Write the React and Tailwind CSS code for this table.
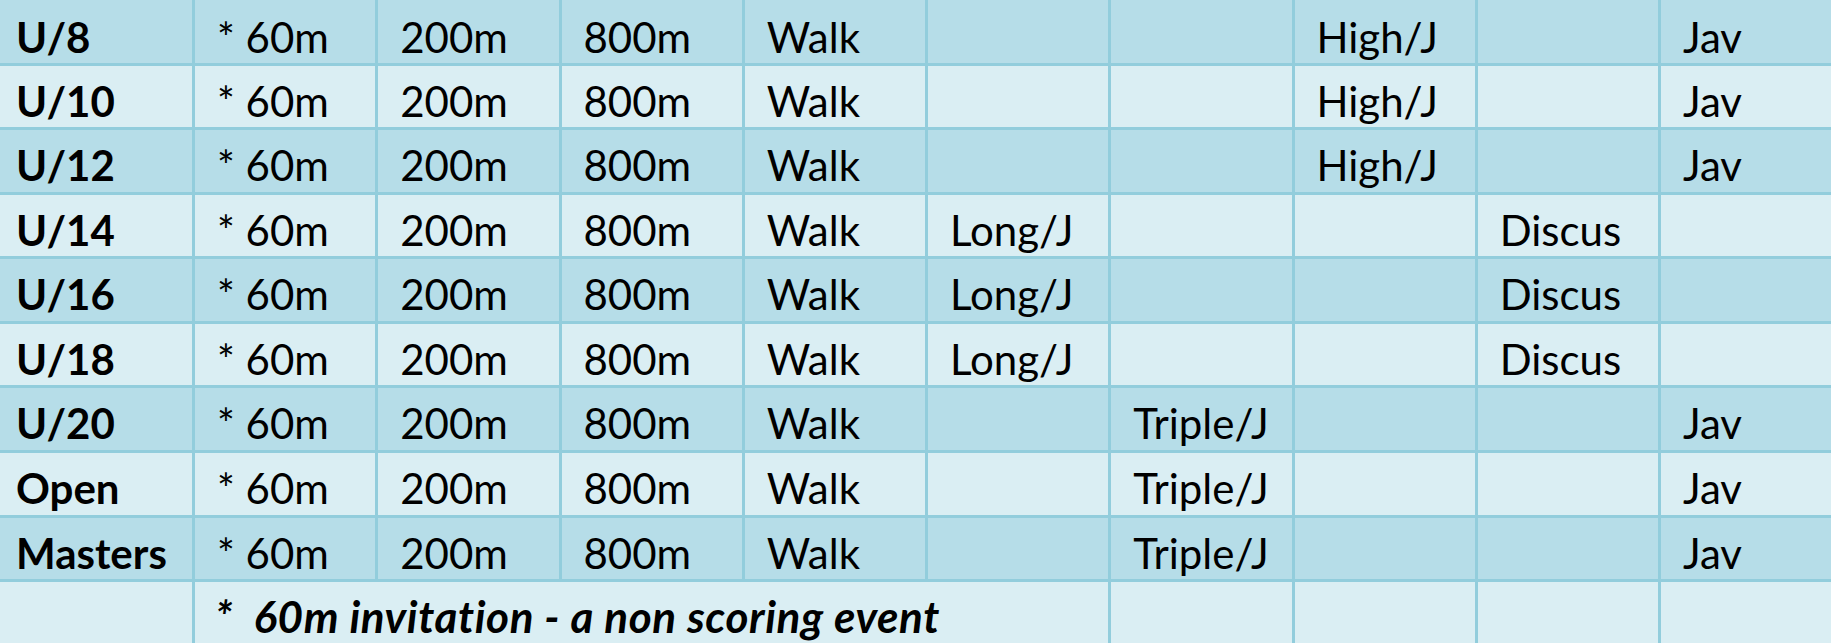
import React from 'react';

const rows = [
  ['U/8', '* 60m', '200m', '800m', 'Walk', '', '', 'High/J', '', 'Jav'],
  ['U/10', '* 60m', '200m', '800m', 'Walk', '', '', 'High/J', '', 'Jav'],
  ['U/12', '* 60m', '200m', '800m', 'Walk', '', '', 'High/J', '', 'Jav'],
  ['U/14', '* 60m', '200m', '800m', 'Walk', 'Long/J', '', '', 'Discus', ''],
  ['U/16', '* 60m', '200m', '800m', 'Walk', 'Long/J', '', '', 'Discus', ''],
  ['U/18', '* 60m', '200m', '800m', 'Walk', 'Long/J', '', '', 'Discus', ''],
  ['U/20', '* 60m', '200m', '800m', 'Walk', '', 'Triple/J', '', '', 'Jav'],
  ['Open', '* 60m', '200m', '800m', 'Walk', '', 'Triple/J', '', '', 'Jav'],
  ['Masters', '* 60m', '200m', '800m', 'Walk', '', 'Triple/J', '', '', 'Jav'],
];

export default function App() {
  return (
    <div
      className="w-[1831px] h-[643px] overflow-hidden bg-[#92cddc] text-black"
      style={{ fontFamily: 'Lato, "Open Sans", sans-serif' }}
    >
      <div className="grid grid-cols-[192px_repeat(8,180.25px)_1fr] grid-rows-[62.5px_repeat(9,61.6px)] gap-[3px]">
        {rows.map((row, i) => {
          const bg = i % 2 === 0 ? 'bg-[#b6dde8]' : 'bg-[#daeef3]';
          return row.map((cell, j) => (
            <div
              key={`${i}-${j}`}
              className={`${bg} whitespace-nowrap text-[42px] leading-none ${
                j === 0 ? 'pl-[16px] font-bold' : 'pl-[22px]'
              } ${i === 0 ? 'pt-[16px]' : 'pt-[14px]'}`}
            >
              {cell}
            </div>
          ));
        })}

        {/* footnote row */}
        <div className="bg-[#daeef3]" />
        <div className="col-span-5 bg-[#daeef3] whitespace-pre pl-[20px] pt-[12px] text-[44px] leading-none font-bold italic tracking-[0.6px]">
          {'*  60m invitation - a non scoring event'}
        </div>
        <div className="bg-[#daeef3]" />
        <div className="bg-[#daeef3]" />
        <div className="bg-[#daeef3]" />
        <div className="bg-[#daeef3]" />
      </div>
    </div>
  );
}
